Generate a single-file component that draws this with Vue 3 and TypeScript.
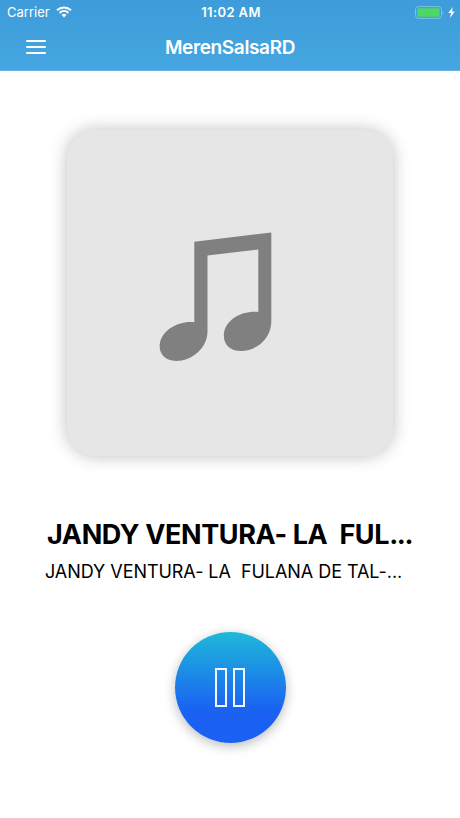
<script setup lang="ts">
import { ref } from 'vue'

const station: string = 'MerenSalsaRD'
const playing = ref<boolean>(true)
const title: string = 'JANDY VENTURA- LA  FUL'
const subtitle: string = 'JANDY VENTURA- LA  FULANA DE TAL-...'
</script>

<template>
  <main class="screen">
    <header class="header">
      <div class="status">
        <div class="carrier">
          <span>Carrier</span>
          <svg class="wifi" viewBox="0 0 16 12" aria-hidden="true">
            <path d="M1 4.3C5 .5 11 .5 15 4.3M3.5 6.9C6.1 4.5 9.9 4.5 12.5 6.9" fill="none" stroke="#fff" stroke-width="2" />
            <path d="M5.5 8.8Q8 6.8 10.5 8.8L8 11.4Z" fill="#fff" />
          </svg>
        </div>
        <time class="clock">11:02 AM</time>
        <div class="power">
          <svg class="battery" viewBox="0 0 29 13" aria-hidden="true">
            <rect x=".5" y=".6" width="26" height="11.8" rx="3" fill="none" stroke="#80bfe8" />
            <rect x="2.3" y="2.3" width="22.4" height="8.4" rx="1.2" fill="#4bd964" />
            <path d="M27.6 4.4Q29 6.5 27.6 8.6Z" fill="#8fc9ec" />
          </svg>
          <svg class="bolt" viewBox="0 0 7 11" aria-hidden="true">
            <path d="M4.8 0L.2 6H3L2 11L6.8 4.6H4Z" fill="#fff" />
          </svg>
        </div>
      </div>
      <nav class="bar">
        <button class="menu" aria-label="Menu"><i></i><i></i><i></i></button>
        <h1 class="station">{{ station }}</h1>
      </nav>
    </header>

    <section class="cover">
      <svg class="note" viewBox="0 0 114 130" aria-hidden="true">
        <path d="M35.3 9.8L112.3.5V90C112.3 105 99 119 82 119C70 119 63.6 111 65 101C67 88 82 78.500 99.300 80V17.500L48.500 23.500V99.500C48.500 116 33 129 17 129C6 129-.5 121.500.8 112C2.600 98.500 19 88.500 35.300 90.200Z" fill="#808080" />
      </svg>
    </section>

    <h2 class="title">{{ title }}<span class="dots">...</span></h2>
    <p class="subtitle">{{ subtitle }}</p>

    <button class="play" :aria-label="playing ? 'Pause' : 'Play'" @click="playing = !playing">
      <svg v-if="playing" class="glyph" viewBox="0 0 30 39" aria-hidden="true">
        <path d="M1 1H11V38H1ZM19 1H29V38H19Z" fill="none" stroke="#f2f8ff" stroke-width="2" />
      </svg>
      <svg v-else class="glyph" viewBox="0 0 30 39" aria-hidden="true">
        <path d="M2 2L28 19.500L2 37Z" fill="none" stroke="#f2f8ff" stroke-width="2" />
      </svg>
    </button>
  </main>
</template>

<style>
body {
  margin: 0;
  background: #fff;
}
</style>

<style scoped>
.screen {
  display: flex;
  flex-direction: column;
  align-items: center;
  width: 460px;
  height: 818px;
  overflow: hidden;
  background: #fff;
  color: #000;
  font-family: Inter, "Liberation Sans", sans-serif;
}

.header {
  box-sizing: border-box;
  width: 100%;
  height: 71px;
  flex: none;
  background: linear-gradient(#3d9cd9, #45a6e1);
  border-bottom: 1px solid #69b5e2;
  color: #fff;
}

.status {
  display: grid;
  grid-template-columns: 1fr auto 1fr;
  align-items: center;
  height: 24px;
  padding: 0 5px 0 7px;
  font-size: 13px;
}

.carrier {
  display: flex;
  align-items: center;
  gap: 6px;
}

.wifi {
  width: 16px;
  height: 12px;
}

.clock {
  font-weight: 600;
  letter-spacing: 0.4px;
}

.power {
  display: flex;
  align-items: center;
  justify-content: flex-end;
  gap: 4px;
}

.battery {
  width: 29px;
  height: 13px;
}

.bolt {
  width: 7px;
  height: 11px;
}

.bar {
  display: grid;
  grid-template-columns: 72px 1fr 72px;
  align-items: center;
  height: 46px;
}

button {
  border: 0;
  padding: 0;
}

.menu {
  display: flex;
  flex-direction: column;
  gap: 4px;
  width: 20px;
  margin-left: 26px;
  background: none;
}

.menu i {
  height: 2px;
  border-radius: 1px;
  background: #fff;
}

.station {
  margin: 0;
  padding-top: 1px;
  text-align: center;
  font-size: 19px;
  font-weight: 600;
  line-height: 24px;
  letter-spacing: -0.36px;
}

.cover {
  display: flex;
  align-items: center;
  justify-content: center;
  flex: none;
  width: 326px;
  height: 326px;
  margin-top: 59px;
  border-radius: 28px;
  background: #e6e6e6;
  box-shadow: 0 0 17px rgba(0, 0, 0, 0.26);
}

.note {
  width: 114px;
  height: 130px;
  margin: 7px 29px 0 0;
}

.title {
  width: 366px;
  margin: 62px 0 0;
  font-size: 27px;
  font-weight: 700;
  line-height: 34px;
  letter-spacing: -0.38px;
  white-space: pre;
}

.dots {
  letter-spacing: -1.3px;
}

.subtitle {
  width: 370px;
  margin: 8px 0 0;
  font-size: 18px;
  font-weight: 400;
  line-height: 24px;
  letter-spacing: -0.05px;
  white-space: pre;
}

.play {
  display: flex;
  align-items: center;
  justify-content: center;
  flex: none;
  width: 111px;
  height: 111px;
  margin-top: 48px;
  border-radius: 50%;
  background: linear-gradient(#1fb9d9, #1a62f2 70%, #1a60f4);
  box-shadow: 0 3px 12px rgba(0, 0, 0, 0.27);
}

.glyph {
  width: 30px;
  height: 39px;
}
</style>
